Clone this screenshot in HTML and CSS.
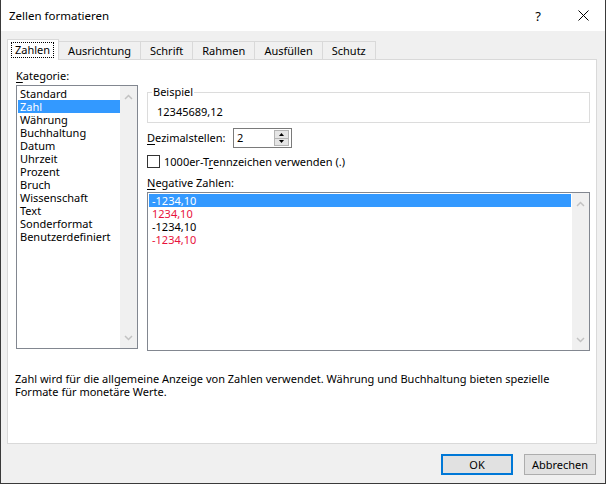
FILE: index.html
```html
<!DOCTYPE html>
<html lang="de">
<head>
<meta charset="utf-8">
<title>Zellen formatieren</title>
<link rel="stylesheet" href="styles.css">
</head>
<body>
<div class="window">
  <header class="titlebar">
    <span class="title">Zellen formatieren</span>
    <span class="help">?</span>
    <span class="close"><svg width="11" height="11" viewBox="0 0 11 11"><path d="M0.5 0.5L10.5 10.5M10.5 0.5L0.5 10.5" stroke="#000" stroke-width="1" fill="none"/></svg></span>
  </header>
  <div class="client">
    <div class="tabs">
      <div class="tab active"><span class="focus">Zahlen</span></div>
      <div class="tab">Ausrichtung</div>
      <div class="tab">Schrift</div>
      <div class="tab">Rahmen</div>
      <div class="tab">Ausfüllen</div>
      <div class="tab">Schutz</div>
    </div>
    <div class="panel">
      <div class="columns">
        <div class="col-left">
          <div class="label cat-label"><u>K</u>ategorie:</div>
          <div class="listbox cat">
            <ul class="items">
              <li>Standard</li>
              <li class="sel">Zahl</li>
              <li>Währung</li>
              <li>Buchhaltung</li>
              <li>Datum</li>
              <li>Uhrzeit</li>
              <li>Prozent</li>
              <li>Bruch</li>
              <li>Wissenschaft</li>
              <li>Text</li>
              <li>Sonderformat</li>
              <li>Benutzerdefiniert</li>
            </ul>
            <div class="vscroll">
              <svg width="9" height="6" viewBox="0 0 9 6"><path d="M1 5L4.5 1.5L8 5" stroke="#c2c2c2" stroke-width="1.5" fill="none"/></svg>
              <svg width="9" height="6" viewBox="0 0 9 6"><path d="M1 1L4.5 4.5L8 1" stroke="#c2c2c2" stroke-width="1.5" fill="none"/></svg>
            </div>
          </div>
        </div>
        <div class="col-right">
          <fieldset class="group">
            <legend>Beispiel</legend>
            <div class="sample">12345689,12</div>
          </fieldset>
          <div class="row decimals">
            <span class="label dec-label"><u>D</u>ezimalstellen:</span>
            <div class="spin">
              <span class="spin-value">2</span>
              <div class="spin-btns">
                <span class="spin-btn"><svg width="5" height="3" viewBox="0 0 5 3"><path d="M0 3L2.5 0L5 3Z" fill="#000"/></svg></span>
                <span class="spin-btn"><svg width="5" height="3" viewBox="0 0 5 3"><path d="M0 0L2.5 3L5 0Z" fill="#000"/></svg></span>
              </div>
            </div>
          </div>
          <div class="row check">
            <span class="checkbox"></span>
            <span class="label">1000er-T<u>r</u>ennzeichen verwenden (.)</span>
          </div>
          <div class="label neg-label"><u>N</u>egative Zahlen:</div>
          <div class="listbox neg">
            <ul class="items">
              <li class="sel">-1234,10</li>
              <li class="red">1234,10</li>
              <li>-1234,10</li>
              <li class="red">-1234,10</li>
            </ul>
            <div class="vscroll">
              <svg width="9" height="6" viewBox="0 0 9 6"><path d="M1 5L4.5 1.5L8 5" stroke="#c2c2c2" stroke-width="1.5" fill="none"/></svg>
              <svg width="9" height="6" viewBox="0 0 9 6"><path d="M1 1L4.5 4.5L8 1" stroke="#c2c2c2" stroke-width="1.5" fill="none"/></svg>
            </div>
          </div>
        </div>
      </div>
      <p class="desc">Zahl wird für die allgemeine Anzeige von Zahlen verwendet. Währung und Buchhaltung bieten spezielle<br>Formate für monetäre Werte.</p>
    </div>
    <div class="buttons">
      <button class="btn default">OK</button>
      <button class="btn">Abbrechen</button>
    </div>
  </div>
</div>
</body>
</html>
```
FILE: styles.css
```css
* { box-sizing: border-box; }
html, body { margin: 0; padding: 0; }
body {
  font-family: "Noto Sans", "DejaVu Sans", sans-serif;
  font-size: 11px;
  line-height: 14px;
  color: #000;
  background: #fff;
}
u { text-decoration: underline; text-underline-offset: 2px; }

.window {
  width: 606px;
  height: 484px;
  background: #f0f0f0;
  border: 1px solid #3a3a3a;
  border-top: 0;
  display: flex;
  flex-direction: column;
}

.titlebar {
  height: 31px;
  flex: none;
  background: #fff;
  display: flex;
  align-items: center;
}
.title { flex: 1; padding-left: 8px; font-size: 11.5px; }
.help { width: 46px; text-align: center; font-size: 13px; }
.close { width: 44px; display: flex; justify-content: center; }

.client { flex: 1; padding: 8px 8px 0 6px; }

.tabs { display: flex; align-items: flex-end; height: 20px; }
.tab {
  height: 18px;
  padding: 0 9px;
  margin-left: -1px;
  border: 1px solid #d9d9d9;
  border-bottom: 0;
  display: flex;
  align-items: center;
  white-space: nowrap;
}
.tab.active {
  height: 21px;
  margin-left: 0;
  margin-bottom: -1px;
  padding: 2px 4px 0 3px;
  align-items: flex-start;
  background: #fff;
  position: relative;
  z-index: 1;
}
.focus {
  padding: 0 3px;
  height: 16px;
  line-height: 14px;
  border: 1px dotted #000;
}

.panel {
  width: 590px;
  height: 385px;
  background: #fff;
  border: 1px solid #d9d9d9;
  padding-top: 9px;
}
.columns { display: flex; gap: 9px; padding-left: 8px; }
.col-left { width: 122px; }
.col-right { width: 443px; padding-top: 16px; display: flex; flex-direction: column; }

.label { line-height: 14px; white-space: nowrap; }
.cat-label { margin-bottom: 2px; }

.listbox { border: 1px solid #828790; background: #fff; display: flex; }
.cat { height: 264px; }
.neg { height: 159px; margin-top: 2px; }
.items { flex: 1; list-style: none; margin: 0; padding: 1px 0 0 1px; }
.items li { height: 13px; line-height: 13px; padding-left: 2px; white-space: nowrap; }
.neg .items { padding-right: 1px; }
.neg .items li { padding-left: 3px; }
.items li.sel { background: #3399ff; color: #fff; }
.items li.red { color: #e8123c; }
.vscroll {
  width: 17px;
  background: #f0f0f0;
  display: flex;
  flex-direction: column;
  justify-content: space-between;
  align-items: center;
  padding: 8px 0 7px;
}
.vscroll svg { display: block; }

.group {
  margin: 0;
  padding: 6px 0 3px 4px;
  border: 1px solid #dcdcdc;
  min-width: 0;
}
.group legend { padding: 0 1px; line-height: 14px; }
.sample { padding-left: 5px; line-height: 14px; }

.row { display: flex; align-items: center; }
.decimals { margin-top: 5px; height: 20px; }
.dec-label { width: 86px; }
.spin {
  width: 59px;
  height: 20px;
  border: 1px solid #7a7a7a;
  display: flex;
  align-items: center;
  justify-content: space-between;
  padding: 0 2px 0 3px;
}
.spin-btns { display: flex; flex-direction: column; width: 15px; height: 16px; }
.spin-btn {
  flex: 1;
  background: #e5e5e5;
  border: 1px solid #b4b4b4;
  display: flex;
  align-items: center;
  justify-content: center;
}
.spin-btn + .spin-btn { border-top: 0; }
.spin-btn svg { display: block; }

.check { margin-top: 7px; height: 14px; align-items: flex-start; gap: 4px; }
.checkbox { width: 13px; height: 13px; border: 1px solid #333; background: #fff; }

.neg-label { margin-top: 7px; }

.desc { margin: 21px 0 0 0; padding-left: 7px; line-height: 13px; white-space: nowrap; }

.buttons { display: flex; justify-content: flex-end; gap: 11px; margin-top: 10px; margin-right: 1px; }
.btn {
  width: 72px;
  height: 21px;
  padding: 0;
  font: inherit;
  line-height: 14px;
  color: #000;
  background: #e1e1e1;
  border: 1px solid #adadad;
}
.btn.default { border: 2px solid #0078d7; }
```
